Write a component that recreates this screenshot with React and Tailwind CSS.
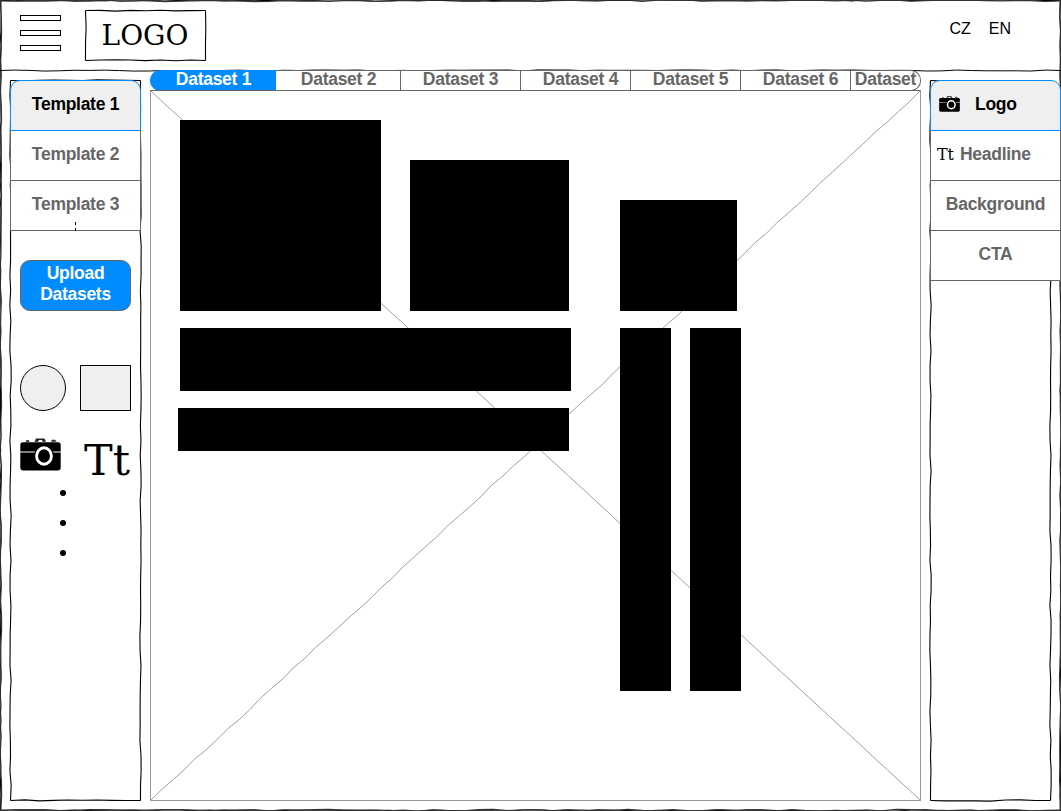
import React from "react";

// Hand-drawn edge: a line whose sideways offset wanders by `amp` pixels.
function edge(x1, y1, x2, y2, amp, seed) {
  const len = Math.hypot(x2 - x1, y2 - y1);
  const n = Math.max(2, Math.round(len / 15));
  const nx = -(y2 - y1) / len;
  const ny = (x2 - x1) / len;
  let d = `M${x1} ${y1}`;
  for (let i = 1; i <= n; i++) {
    const r = Math.sin((i + seed) * 12.9898) * 43758.5453;
    const o = i === n ? 0 : (r - Math.floor(r) - 0.5) * 2 * amp;
    const t = i / n;
    d += ` L${(x1 + (x2 - x1) * t + nx * o).toFixed(2)} ${(y1 + (y2 - y1) * t + ny * o).toFixed(2)}`;
  }
  return d;
}

function RoughFrame({ w, h, seed = 1, className }) {
  const a = 0.5, r = w - 0.5, b = h - 0.5;
  return (
    <svg width={w} height={h} className={`pointer-events-none absolute overflow-visible ${className}`} fill="none" stroke="#000" strokeWidth="1.1">
      <path d={edge(a, a, r, a, 0.7, seed)} />
      <path d={edge(r, a, r, b, 0.7, seed + 31)} />
      <path d={edge(a, b, r, b, 0.7, seed + 57)} />
      <path d={edge(a, a, a, b, 0.7, seed + 83)} />
    </svg>
  );
}

function Camera({ className }) {
  return (
    <svg viewBox="0 0 41 33" className={className} preserveAspectRatio="none">
      <path d="M5.500 3.700 6.500 2h2.200l1 1.700zM31 3.700l.8-1.900h3.400l1.300 1.900z" fill="#333" />
      <path d="M14.500 3.700 16 .6h8.500l1.500 3.100h-3.300l-.8-1.700h-3l-.8 1.700z" fill="#222" />
      <path d="M3 4.300h35q2.700 0 2.700 2.700v6.500H.3V7Q.3 4.300 3 4.300zM.3 14.400h40.400V29.500q0 3-3 3H3.300q-3 0-3-3z" />
      <ellipse cx="24" cy="18" rx="10" ry="11" />
      <ellipse cx="24" cy="18" rx="7.400" ry="8.200" fill="none" stroke="#fff" strokeWidth="2.900" />
    </svg>
  );
}

const tabs = [
  ["Dataset 2", "w-[125px] pl-px"],
  ["Dataset 3", "w-[120px]"],
  ["Dataset 4", "w-[110px] pl-[10px]"],
  ["Dataset 5", "w-[110px] pl-[10px]"],
  ["Dataset 6", "w-[110px] pl-[10px]"],
];

export default function App() {
  return (
    <div className="relative isolate flex h-[811px] w-[1061px] flex-col overflow-hidden bg-white font-['Liberation_Sans',sans-serif] text-black">
      <RoughFrame w={1061} h={811} seed={5} className="left-0 top-0 -z-10" />
      <svg width="1061" height="811" className="pointer-events-none absolute left-0 top-0 -z-10" fill="none" stroke="#333" strokeWidth="1.2">
        <path d={edge(0.5, 0.8, 1060, 0.8, 0.8, 19)} />
        <path d={edge(0.8, 0.5, 0.8, 811, 0.8, 71)} />
        <path d={edge(1060.2, 0.5, 1060.2, 811, 0.8, 44)} />
        <path d={edge(0, 810.2, 1061, 810.2, 0.8, 91)} />
        <path d={edge(0, 70.5, 1061, 70.5, 0.6, 27)} stroke="#000" strokeWidth="1" />
      </svg>
      <header className="flex h-[70px] shrink-0 items-start pl-5 pr-[50px]">
        <div className="flex w-[41px] flex-col gap-[9px] pt-[15px]">
          <span className="h-[6px] border border-black" />
          <span className="h-[6px] border border-black" />
          <span className="h-[6px] border border-black" />
        </div>
        <div className="relative ml-6 mt-[10px] flex h-[51px] w-[121px] items-center justify-center pr-px font-['DejaVu_Serif',serif] text-[28px] leading-none">
          <RoughFrame w={121} h={51} seed={14} className="left-0 top-0" />
          <span>LOGO</span>
        </div>
        <nav className="ml-auto flex gap-[18px] pt-[17px] text-[16px] leading-6">
          <span>CZ</span>
          <span>EN</span>
        </nav>
      </header>

      <div className="flex min-h-0 flex-1">
        <aside className="relative ml-[10px] mt-[10px] flex h-[721px] w-[131px] flex-col">
          <RoughFrame w={131} h={721} seed={21} className="left-0 top-0 -z-10" />
          <div className="flex flex-col text-center text-[17.500px] font-bold leading-[46px] tracking-[-0.28px] text-[#666]">
            <div className="h-[51px] rounded-t-[10px] border border-[#008cff] bg-[#efefef] text-black">Template 1</div>
            <div className="h-[50px] border-x border-b border-[#666] bg-white">Template 2</div>
            <div className="relative h-[50px] border-x border-b border-[#666] bg-white">
              Template 3
              <span className="absolute left-[64px] top-[41px] h-[3px] w-px bg-black" />
              <span className="absolute left-[64px] top-[47px] h-[3px] w-px bg-black" />
            </div>
          </div>
          <button className="ml-[10px] mt-[29px] h-[51px] w-[111px] rounded-[10px] border border-[#666] bg-[#008cff] pb-[4px] text-[17.500px] font-bold leading-[21px] tracking-[-0.28px] text-white">
            Upload
            <br />
            Datasets
          </button>
          <div className="mt-[54px] flex justify-between px-[10px]">
            <div className="size-[46px] rounded-full border border-black bg-[#efefef]" />
            <div className="h-[46px] w-[51px] border border-black bg-[#efefef]" />
          </div>
          <div className="mt-[27px] flex h-[48px] pl-[10px]">
            <Camera className="h-[33px] w-[41px]" />
            <span className="ml-[23px] font-['DejaVu_Serif',serif] text-[43px] leading-[44px]">Tt</span>
          </div>
          <div className="ml-[50px] mt-[4px] flex flex-col gap-6">
            <span className="size-[6px] rounded-full bg-black" />
            <span className="size-[6px] rounded-full bg-black" />
            <span className="size-[6px] rounded-full bg-black" />
          </div>
        </aside>

        <main className="ml-[9px] flex w-[771px] flex-col">
          <div className="flex h-[21px] shrink-0 text-center text-[17.500px] font-bold leading-[17px] tracking-[-0.28px] text-[#666]">
            <div className="h-[21px] w-[126px] rounded-l-[10px] border border-[#008cff] bg-[#008cff] pl-px text-white">Dataset 1</div>
            {tabs.map(([label, size]) => (
              <div key={label} className={`${size} border-y border-r border-[#666] bg-white`}>{label}</div>
            ))}
            <div className="w-[70px] overflow-hidden rounded-r-[10px] border-y border-r border-[#666] bg-white">Dataset</div>
          </div>
          <section className="relative -mt-px h-[711px] border border-t-[#666] border-[#999]">
            <svg width="769" height="709" className="absolute left-0 top-0 -z-10" fill="none" stroke="#888" strokeWidth="0.8">
              <path d={edge(0, 0, 769, 709, 0.2, 9)} />
              <path d={edge(769, 0, 0, 709, 0.7, 62)} />
            </svg>
            <div className="flex items-start">
              <div className="w-[439px] pl-[27px] pt-[29px]">
                <div className="flex h-[191px] items-end justify-between pl-[2px] pr-[21px]">
                  <div className="h-[191px] w-[201px] bg-black" />
                  <div className="h-[151px] w-[159px] bg-black" />
                </div>
                <div className="ml-[2px] mt-[17px] h-[63px] w-[391px] bg-black" />
                <div className="mt-[17px] h-[43px] w-[391px] bg-black" />
              </div>
              <div className="ml-[30px] mt-[109px]">
                <div className="h-[111px] w-[117px] bg-black" />
                <div className="mt-[17px] flex gap-[19px]">
                  <div className="h-[363px] w-[51px] bg-black" />
                  <div className="h-[363px] w-[51px] bg-black" />
                </div>
              </div>
            </div>
          </section>
        </main>

        <aside className="relative ml-[9px] mt-[10px] h-[721px] w-[131px]">
          <RoughFrame w={121} h={721} seed={35} className="left-0 top-0 -z-10" />
          <div className="flex flex-col text-center text-[17.500px] font-bold leading-[46px] tracking-[-0.28px] text-[#666]">
            <div className="flex h-[51px] rounded-t-[10px] border border-[#008cff] bg-[#efefef] pl-2 text-black">
              <Camera className="mt-[15px] h-4 w-[21px]" />
              <span className="ml-[15px]">Logo</span>
            </div>
            <div className="flex h-[50px] border-x border-b border-[#666] bg-white pl-[6px]">
              <span className="w-[23px] text-left font-['DejaVu_Serif',serif] text-[16px] font-normal leading-[48px] text-black">Tt</span>
              <span>Headline</span>
            </div>
            <div className="h-[50px] border-x border-b border-[#666] bg-white">Background</div>
            <div className="h-[50px] border-x border-b border-[#666] bg-white">CTA</div>
          </div>
        </aside>
      </div>
    </div>
  );
}
